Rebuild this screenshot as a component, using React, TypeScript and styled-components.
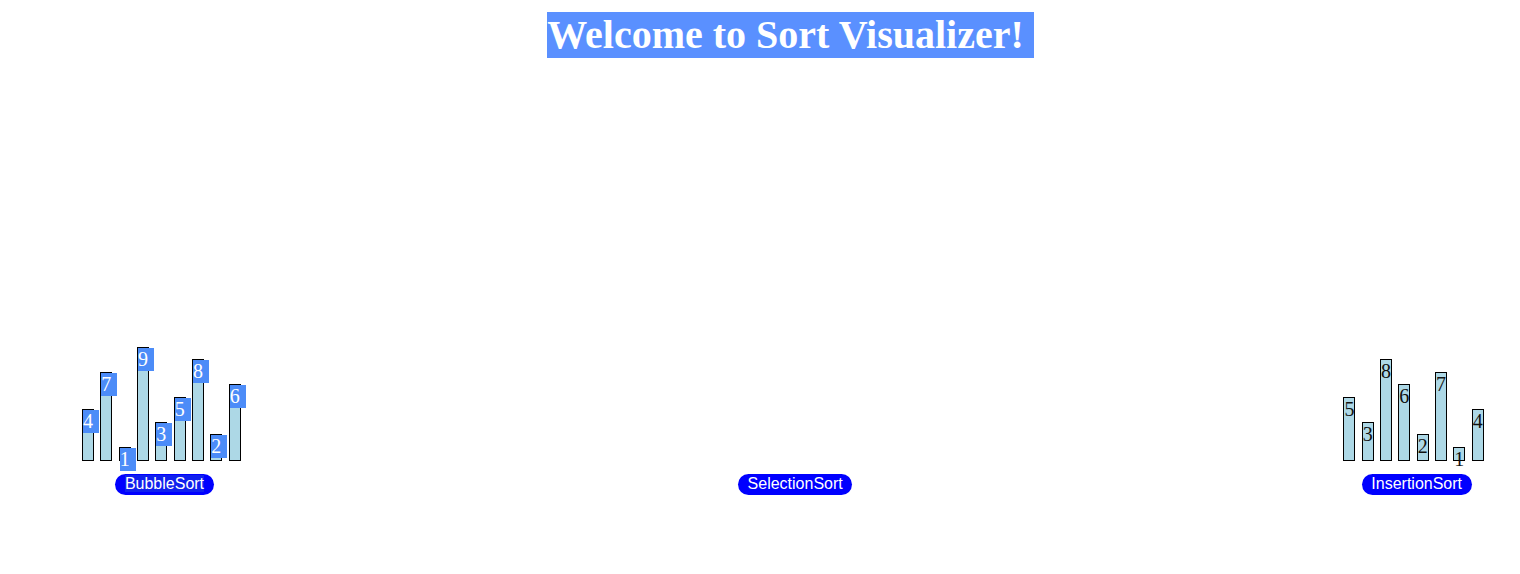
import React from "react";
import styled, { createGlobalStyle } from "styled-components";

const GlobalStyle = createGlobalStyle`
  html, body { margin: 0; padding: 0; background: #ffffff; }
  body { margin: 8px; font-family: "Liberation Serif", "Times New Roman", serif; }
`;

const Page = styled.div`
  display: flex;
  flex-direction: column;
`;

const Header = styled.div`
  display: flex;
  justify-content: center;
  padding: 4px 0 0 61px;
`;

const Title = styled.h1`
  margin: 0;
  font-family: "Liberation Serif", "Times New Roman", serif;
  font-weight: bold;
  font-size: 40px;
  line-height: 46px;
  color: #ffffff;
  background: #5a90ff;
  padding-right: 10px;
`;

const Row = styled.div`
  display: flex;
  justify-content: space-between;
  align-items: flex-start;
  margin-top: 283px;
  padding: 0 22px 0 74px;
`;

const Column = styled.div`
  display: flex;
  flex-direction: column;
  align-items: center;
`;

const Bars = styled.div`
  display: flex;
  align-items: flex-end;
  height: 120px;
`;

const Bar = styled.div<{ $h: number }>`
  box-sizing: content-box;
  width: 10px;
  height: ${(p) => p.$h}px;
  border: 1px solid #000000;
  background: #add8e6;
  margin-right: 6.33px;
  position: relative;
  overflow: visible;
`;

const Label = styled.span<{ $selected: boolean }>`
  display: inline-block;
  white-space: nowrap;
  font-family: "Liberation Serif", "Times New Roman", serif;
  font-size: 20px;
  line-height: 23px;
  padding-right: ${(p) => (p.$selected ? "6px" : "0")};
  color: ${(p) => (p.$selected ? "#ffffff" : "#111111")};
  background: ${(p) => (p.$selected ? "#4c8cf8" : "transparent")};
`;

const SortButton = styled.button<{ $selected?: boolean }>`
  margin-top: 13px;
  border: none;
  border-radius: 11px;
  background: #0000ff;
  color: #ffffff;
  font-family: "Liberation Sans", Arial, sans-serif;
  font-size: 16px;
  line-height: 18px;
  padding: 1px 9.5px 2px;
  cursor: pointer;
`;

const ButtonText = styled.span<{ $selected?: boolean }>`
  background: ${(p) => (p.$selected ? "#1020ee" : "transparent")};
`;

type Sorter = {
  name: string;
  values: number[];
  selected: boolean;
};

const sorters: Sorter[] = [
  { name: "BubbleSort", values: [4, 7, 1, 9, 3, 5, 8, 2, 6], selected: true },
  { name: "SelectionSort", values: [], selected: false },
  { name: "InsertionSort", values: [5, 3, 8, 6, 2, 7, 1, 4], selected: false },
];

export default function App() {
  return (
    <Page>
      <GlobalStyle />
      <Header>
        <Title>Welcome to Sort Visualizer!</Title>
      </Header>
      <Row>
        {sorters.map((s) => (
          <Column key={s.name}>
            <Bars>
              {s.values.map((v, i) => (
                <Bar key={i} $h={v * 12.5}>
                  <Label $selected={s.selected}>{v}</Label>
                </Bar>
              ))}
            </Bars>
            <SortButton>
              <ButtonText $selected={s.selected}>{s.name}</ButtonText>
            </SortButton>
          </Column>
        ))}
      </Row>
    </Page>
  );
}
